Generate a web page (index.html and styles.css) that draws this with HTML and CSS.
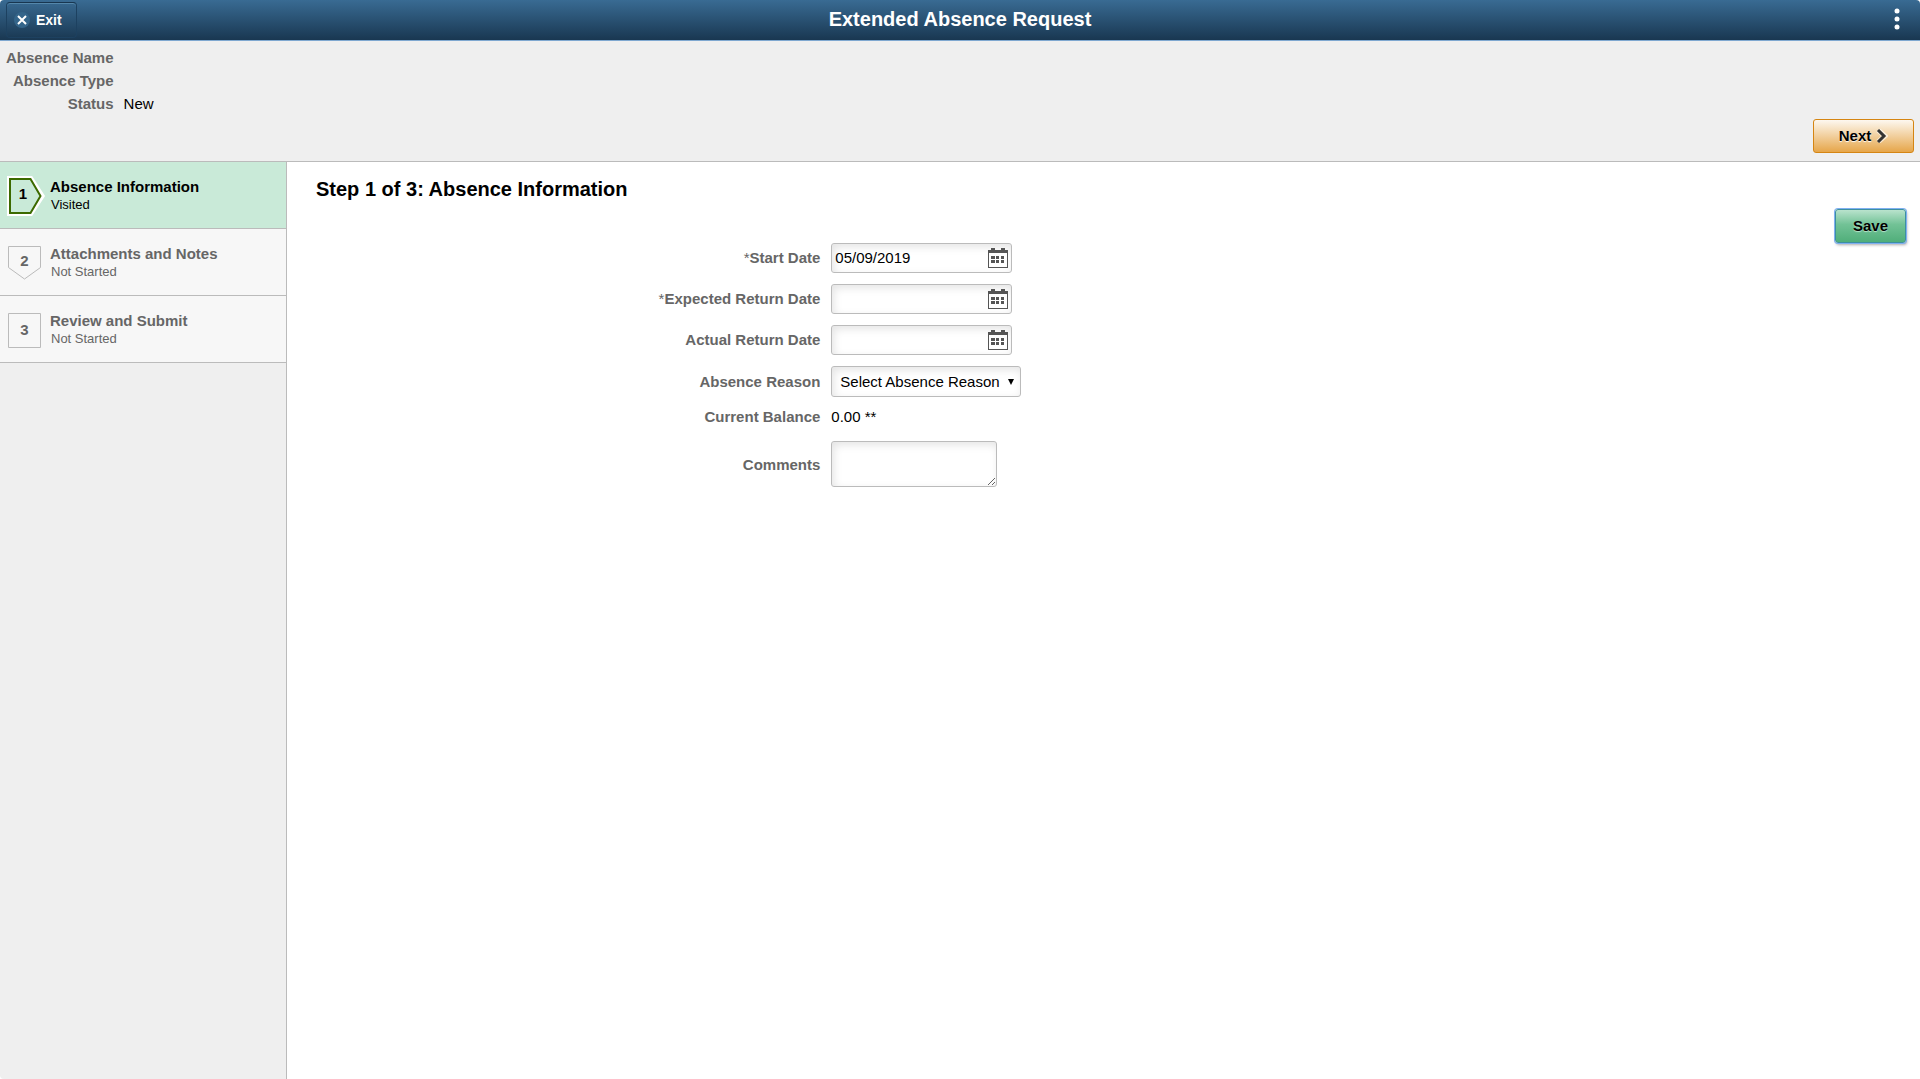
FILE: index.html
```html
<!DOCTYPE html>
<html lang="en">
<head>
<meta charset="utf-8">
<title>Extended Absence Request</title>
<meta name="viewport" content="width=device-width, initial-scale=1">
<link rel="stylesheet" href="styles.css">
</head>
<body>
<svg class="sprite" aria-hidden="true">
  <symbol id="calendar" viewBox="0 0 20 20">
    <path fill="#555" d="M3 0h4v2h6V0h4v2h3v18H0V2h3zM1 5v14h18V5z" fill-rule="evenodd"/>
    <path fill="#555" d="M3 8h4v3H3zM8 8h3v3H8zM13 8h3v3h-3zM3 12h4v3H3zM8 12h3v3H8zM13 12h3v3h-3z"/>
  </symbol>
</svg>
<div class="page">
  <header class="banner">
    <div class="banner-side">
      <button class="exit" type="button">
        <svg width="16" height="16" viewBox="0 0 16 16" aria-hidden="true"><circle cx="8" cy="8" r="8" fill="#34658a"/><path d="M4 4l8 8M12 4l-8 8" stroke="#fff" stroke-width="2"/></svg>
        Exit
      </button>
    </div>
    <h1 class="banner-title">Extended Absence Request</h1>
    <div class="banner-side banner-end">
      <button class="more" type="button" aria-label="Actions">
        <svg width="8" height="24" viewBox="0 0 8 24" fill="#fff" aria-hidden="true"><circle cx="4" cy="4" r="2.500"/><circle cx="4" cy="12" r="2.500"/><circle cx="4" cy="20" r="2.500"/></svg>
      </button>
    </div>
  </header>

  <section class="summary">
    <dl class="facts">
      <dt>Absence Name</dt><dd></dd>
      <dt>Absence Type</dt><dd></dd>
      <dt>Status</dt><dd>New</dd>
    </dl>
    <button class="next" type="button">Next
      <svg width="12" height="14" viewBox="0 0 12 14" aria-hidden="true"><path d="M2 1l7 6-7 6" fill="none" stroke="#fff" stroke-opacity=".6" stroke-width="5"/><path d="M2 1l6 6-6 6" fill="none" stroke="#333" stroke-width="3"/></svg>
    </button>
  </section>

  <div class="body">
    <nav class="steps" aria-label="Steps">
      <a class="step step-current" href="#step1" aria-current="step">
        <span class="badge">
          <svg width="38" height="40" viewBox="0 0 38 40" aria-hidden="true"><path d="M2 2h20.500l11 17-11 17H2z" fill="none" stroke="#fff" stroke-width="6"/><path d="M2 2h20.500l10 17-10 17H2z" fill="#c9ead8" stroke="#3c6a00" stroke-width="2"/></svg>
          <span class="number">1</span>
        </span>
        <span class="step-text"><strong class="step-name">Absence Information</strong><span class="step-state">Visited</span></span>
      </a>
      <a class="step" href="#step2">
        <span class="badge">
          <svg width="38" height="40" viewBox="0 0 38 40" aria-hidden="true"><path d="M.5 2.500h32v21L16.500 35 .5 23.500z" fill="none" stroke="#bbb"/></svg>
          <span class="number">2</span>
        </span>
        <span class="step-text"><strong class="step-name">Attachments and Notes</strong><span class="step-state">Not Started</span></span>
      </a>
      <a class="step" href="#step3">
        <span class="badge">
          <svg width="38" height="40" viewBox="0 0 38 40" aria-hidden="true"><path d="M.5 2.500h32v34H.5z" fill="none" stroke="#bbb"/></svg>
          <span class="number number-square">3</span>
        </span>
        <span class="step-text"><strong class="step-name">Review and Submit</strong><span class="step-state">Not Started</span></span>
      </a>
    </nav>

    <main class="content">
      <h2 class="step-title">Step 1 of 3: Absence Information</h2>
      <div class="actions"><button class="save" type="submit" form="absence">Save</button></div>
      <form class="form" id="absence">
        <label for="start"><span class="required">*</span>Start Date</label>
        <div class="date"><input id="start" type="text" value="05/09/2019"><button type="button" aria-label="Choose start date"><svg width="20" height="20" aria-hidden="true"><use href="#calendar"/></svg></button></div>
        <label for="expected"><span class="required">*</span>Expected Return Date</label>
        <div class="date"><input id="expected" type="text"><button type="button" aria-label="Choose expected return date"><svg width="20" height="20" aria-hidden="true"><use href="#calendar"/></svg></button></div>
        <label for="actual">Actual Return Date</label>
        <div class="date"><input id="actual" type="text"><button type="button" aria-label="Choose actual return date"><svg width="20" height="20" aria-hidden="true"><use href="#calendar"/></svg></button></div>
        <label for="reason">Absence Reason</label>
        <div class="choice"><select id="reason"><option>Select Absence Reason</option></select><span class="arrow"></span></div>
        <label for="balance">Current Balance</label>
        <output class="balance" id="balance">0.00 **</output>
        <label class="comments-label" for="comments">Comments</label>
        <textarea id="comments"></textarea>
      </form>
    </main>
  </div>
</div>
</body>
</html>
```
FILE: styles.css
```css
* { box-sizing: border-box; }

html { background: #fff; }

body {
  margin: 0;
  font: 15px/18px "Liberation Sans", Arial, sans-serif;
  color: #000;
}

button, input, select, textarea { font: inherit; color: inherit; margin: 0; }
button { cursor: pointer; }
svg { display: block; flex: none; }
.sprite { position: absolute; width: 0; height: 0; }

.page {
  display: flex;
  flex-direction: column;
  min-height: 100vh;
  border-radius: 4px;
  overflow: hidden;
}

/* Banner */
.banner {
  display: grid;
  grid-template-columns: 1fr auto 1fr;
  align-items: center;
  height: 41px;
  padding: 0 6px;
  border-bottom: 1px solid #7fa8d0;
  background: linear-gradient(#396b93, #193751);
  color: #fff;
}
.banner-side { display: flex; align-items: center; }
.banner-end { justify-content: flex-end; }
.banner-title { margin: 0; font-size: 20px; line-height: 24px; padding-bottom: 2px; }
.exit {
  display: flex;
  align-items: center;
  gap: 6px;
  height: 36px;
  width: 71px;
  padding: 0 7px;
  border: 1px solid #1d4160;
  border-top-color: #183650;
  border-radius: 4px;
  background: none;
  box-shadow: inset 0 1px #5487ab;
  font-size: 14px;
  font-weight: bold;
}
.more { padding: 0 13px 2px; border: 0; background: none; }

/* Summary */
.summary {
  display: flex;
  justify-content: space-between;
  align-items: flex-end;
  height: 121px;
  padding: 5px 6px 8px;
  border-bottom: 1px solid #bbb;
  background: #efefef;
}
.facts {
  display: grid;
  grid-template-columns: auto auto;
  grid-auto-rows: 23px;
  column-gap: 10px;
  align-self: flex-start;
  margin: 0;
  line-height: 23px;
}
.facts dt { text-align: right; font-weight: bold; color: #666; }
.facts dd { margin: 0; }
.next {
  display: flex;
  align-items: center;
  justify-content: center;
  gap: 5px;
  width: 101px;
  height: 34px;
  padding: 0;
  border: 1px solid #d58512;
  border-radius: 3px;
  background: linear-gradient(#fdf8f0, #e6a64a);
  font-weight: bold;
  text-shadow: 0 1px 1px #fff;
}

/* Steps */
.body { display: flex; flex: 1; }
.steps { flex: none; width: 287px; border-right: 1px solid #bbb; background: #efefef; }
.step {
  display: flex;
  align-items: center;
  gap: 4px;
  height: 67px;
  padding-left: 8px;
  border-bottom: 1px solid #bbb;
  background: #f7f7f7;
  color: #666;
  text-decoration: none;
}
.step-current { background: #c9ead8; color: #000; }
.badge { display: grid; flex: none; width: 38px; height: 36px; }
.badge svg { grid-area: 1 / 1; overflow: visible; }
.number { grid-area: 1 / 1; width: 33px; line-height: 34px; text-align: center; font-weight: bold; }
.number-square { line-height: 38px; }
.step-current .number { width: 30px; }
.step-text { display: flex; flex-direction: column; padding-top: 2px; }
.step-name { line-height: 18px; }
.step-state { padding-left: 1px; font-size: 13px; line-height: 18px; }

/* Content */
.content { flex: 1; padding: 15px 14px 24px 0; }
.step-title { margin: 0 0 8px 29px; font-size: 20px; line-height: 24px; }
.actions { display: flex; justify-content: flex-end; }
.save {
  width: 71px;
  height: 34px;
  padding: 0;
  border: 1px solid #3d8fa0;
  border-radius: 3px;
  background: linear-gradient(#b9e3cd, #72c296 45%, #50ae7a);
  box-shadow: 0 0 0 1px #7fb0f0, 1px 2px 3px #aaa;
  font-weight: bold;
  text-shadow: 0 1px 1px #b9e3cd;
}
.form {
  display: grid;
  grid-template-columns: 1fr 2fr;
  row-gap: 11px;
  align-items: center;
  margin-right: -14px;
}
.form label { padding-right: 11px; text-align: right; font-weight: bold; color: #666; }
.form .comments-label { padding-top: 6px; }
.required { font-weight: normal; }
.date, .choice, .form textarea {
  border: 1px solid #bbb;
  border-radius: 3px;
  background: #fff;
  box-shadow: inset 2px 3px 8px #e4e4e4;
}
.date { display: flex; align-items: center; width: 181px; height: 30px; }
.date input { flex: 1; min-width: 0; padding: 0 3px; border: 0; background: none; }
.date button { padding: 0 3px; border: 0; background: none; }
.choice { display: flex; align-items: center; width: 190px; height: 31px; }
.choice select {
  flex: 1;
  min-width: 0;
  padding: 0 0 0 8px;
  border: 0;
  background: none;
  appearance: none;
}
.arrow {
  flex: none;
  margin-right: 6px;
  border: 3px solid transparent;
  border-top: 6px solid #000;
  border-bottom: 0;
  pointer-events: none;
}
.balance { line-height: 18px; }
.form textarea { display: block; width: 166px; height: 46px; margin-top: 4px; padding: 4px; }
```
